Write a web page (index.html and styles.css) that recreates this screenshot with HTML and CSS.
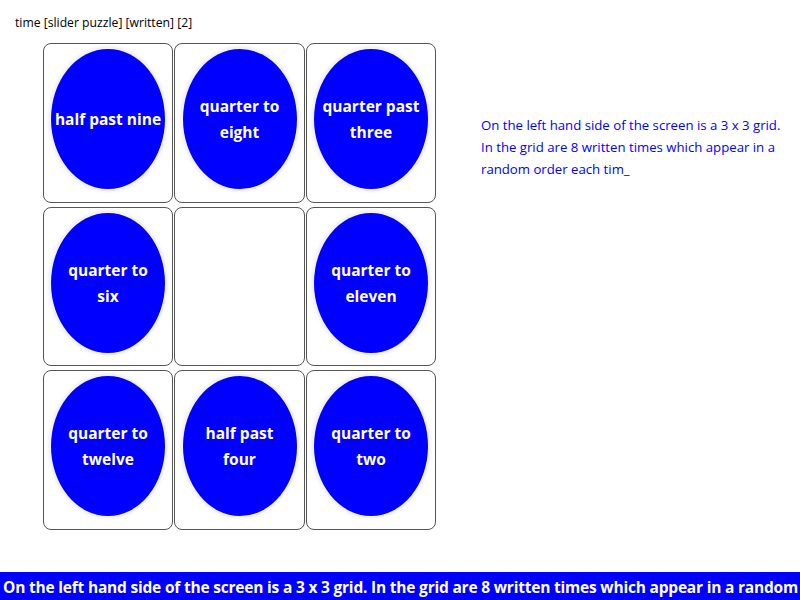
FILE: index.html
```html
<!DOCTYPE html>
<html>
<head>
<meta charset="utf-8">
<link rel="stylesheet" href="styles.css">
</head>
<body>
<div class="page">
  <div class="title">time [slider puzzle] [written] [2]</div>
  <div class="main">
    <div class="grid">
      <div class="cell"><div class="oval"><span>half past nine</span></div></div>
      <div class="cell"><div class="oval"><span>quarter to<br>eight</span></div></div>
      <div class="cell"><div class="oval"><span>quarter past<br>three</span></div></div>
      <div class="cell"><div class="oval"><span>quarter to<br>six</span></div></div>
      <div class="cell empty"></div>
      <div class="cell"><div class="oval"><span>quarter to<br>eleven</span></div></div>
      <div class="cell"><div class="oval"><span>quarter to<br>twelve</span></div></div>
      <div class="cell"><div class="oval"><span>half past<br>four</span></div></div>
      <div class="cell"><div class="oval"><span>quarter to<br>two</span></div></div>
    </div>
    <div class="desc">On the left hand side of the screen is a 3 x 3 grid. In the grid are 8 written times which appear in a random order each tim_</div>
  </div>
  <div class="bar">On the left hand side of the screen is a 3 x 3 grid. In the grid are 8 written times which appear in a random</div>
</div>
</body>
</html>
```
FILE: styles.css
```css
html, body {
  margin: 0;
  padding: 0;
  background: #fff;
}
.page {
  width: 800px;
  height: 600px;
  display: flex;
  flex-direction: column;
  font-family: "Comic Sans MS", "Open Sans", sans-serif;
  overflow: hidden;
}
.title {
  padding: 14px 0 0 15px;
  font-size: 12.2px;
  line-height: 18px;
  height: 29px;
  box-sizing: border-box;
  color: #000;
}
.main {
  display: flex;
  padding: 14px 0 0 43px;
}
.grid {
  display: grid;
  grid-template-columns: 130px 131px 130px;
  grid-template-rows: 159.5px 159.5px 159.5px;
  column-gap: 1px;
  row-gap: 4px;
}
.cell {
  border: 1px solid #555;
  border-radius: 8px;
  box-sizing: border-box;
  display: flex;
  justify-content: center;
  align-items: flex-start;
  padding-top: 5px;
}
.oval {
  width: 114px;
  height: 140px;
  flex: none;
  border-radius: 50%;
  background: #0000ff;
  box-shadow: 0 0 3px 3px #f0f0f0;
  display: flex;
  align-items: center;
  justify-content: center;
  text-align: center;
  color: #fff;
  font-weight: bold;
  font-size: 15.5px;
  line-height: 26px;
  padding: 0;
  box-sizing: border-box;
  white-space: nowrap;
}
.oval span {
  display: block;
}
.desc {
  margin: 71px 0 0 45px;
  width: 310px;
  color: #0000ff;
  font-size: 13.2px;
  line-height: 22px;
}
.bar {
  margin-top: auto;
  height: 28px;
  background: #0000ff;
  color: #fff;
  font-weight: bold;
  font-size: 15.5px;
  letter-spacing: -0.2px;
  line-height: 30px;
  padding-left: 3px;
  white-space: nowrap;
  overflow: hidden;
}
```
